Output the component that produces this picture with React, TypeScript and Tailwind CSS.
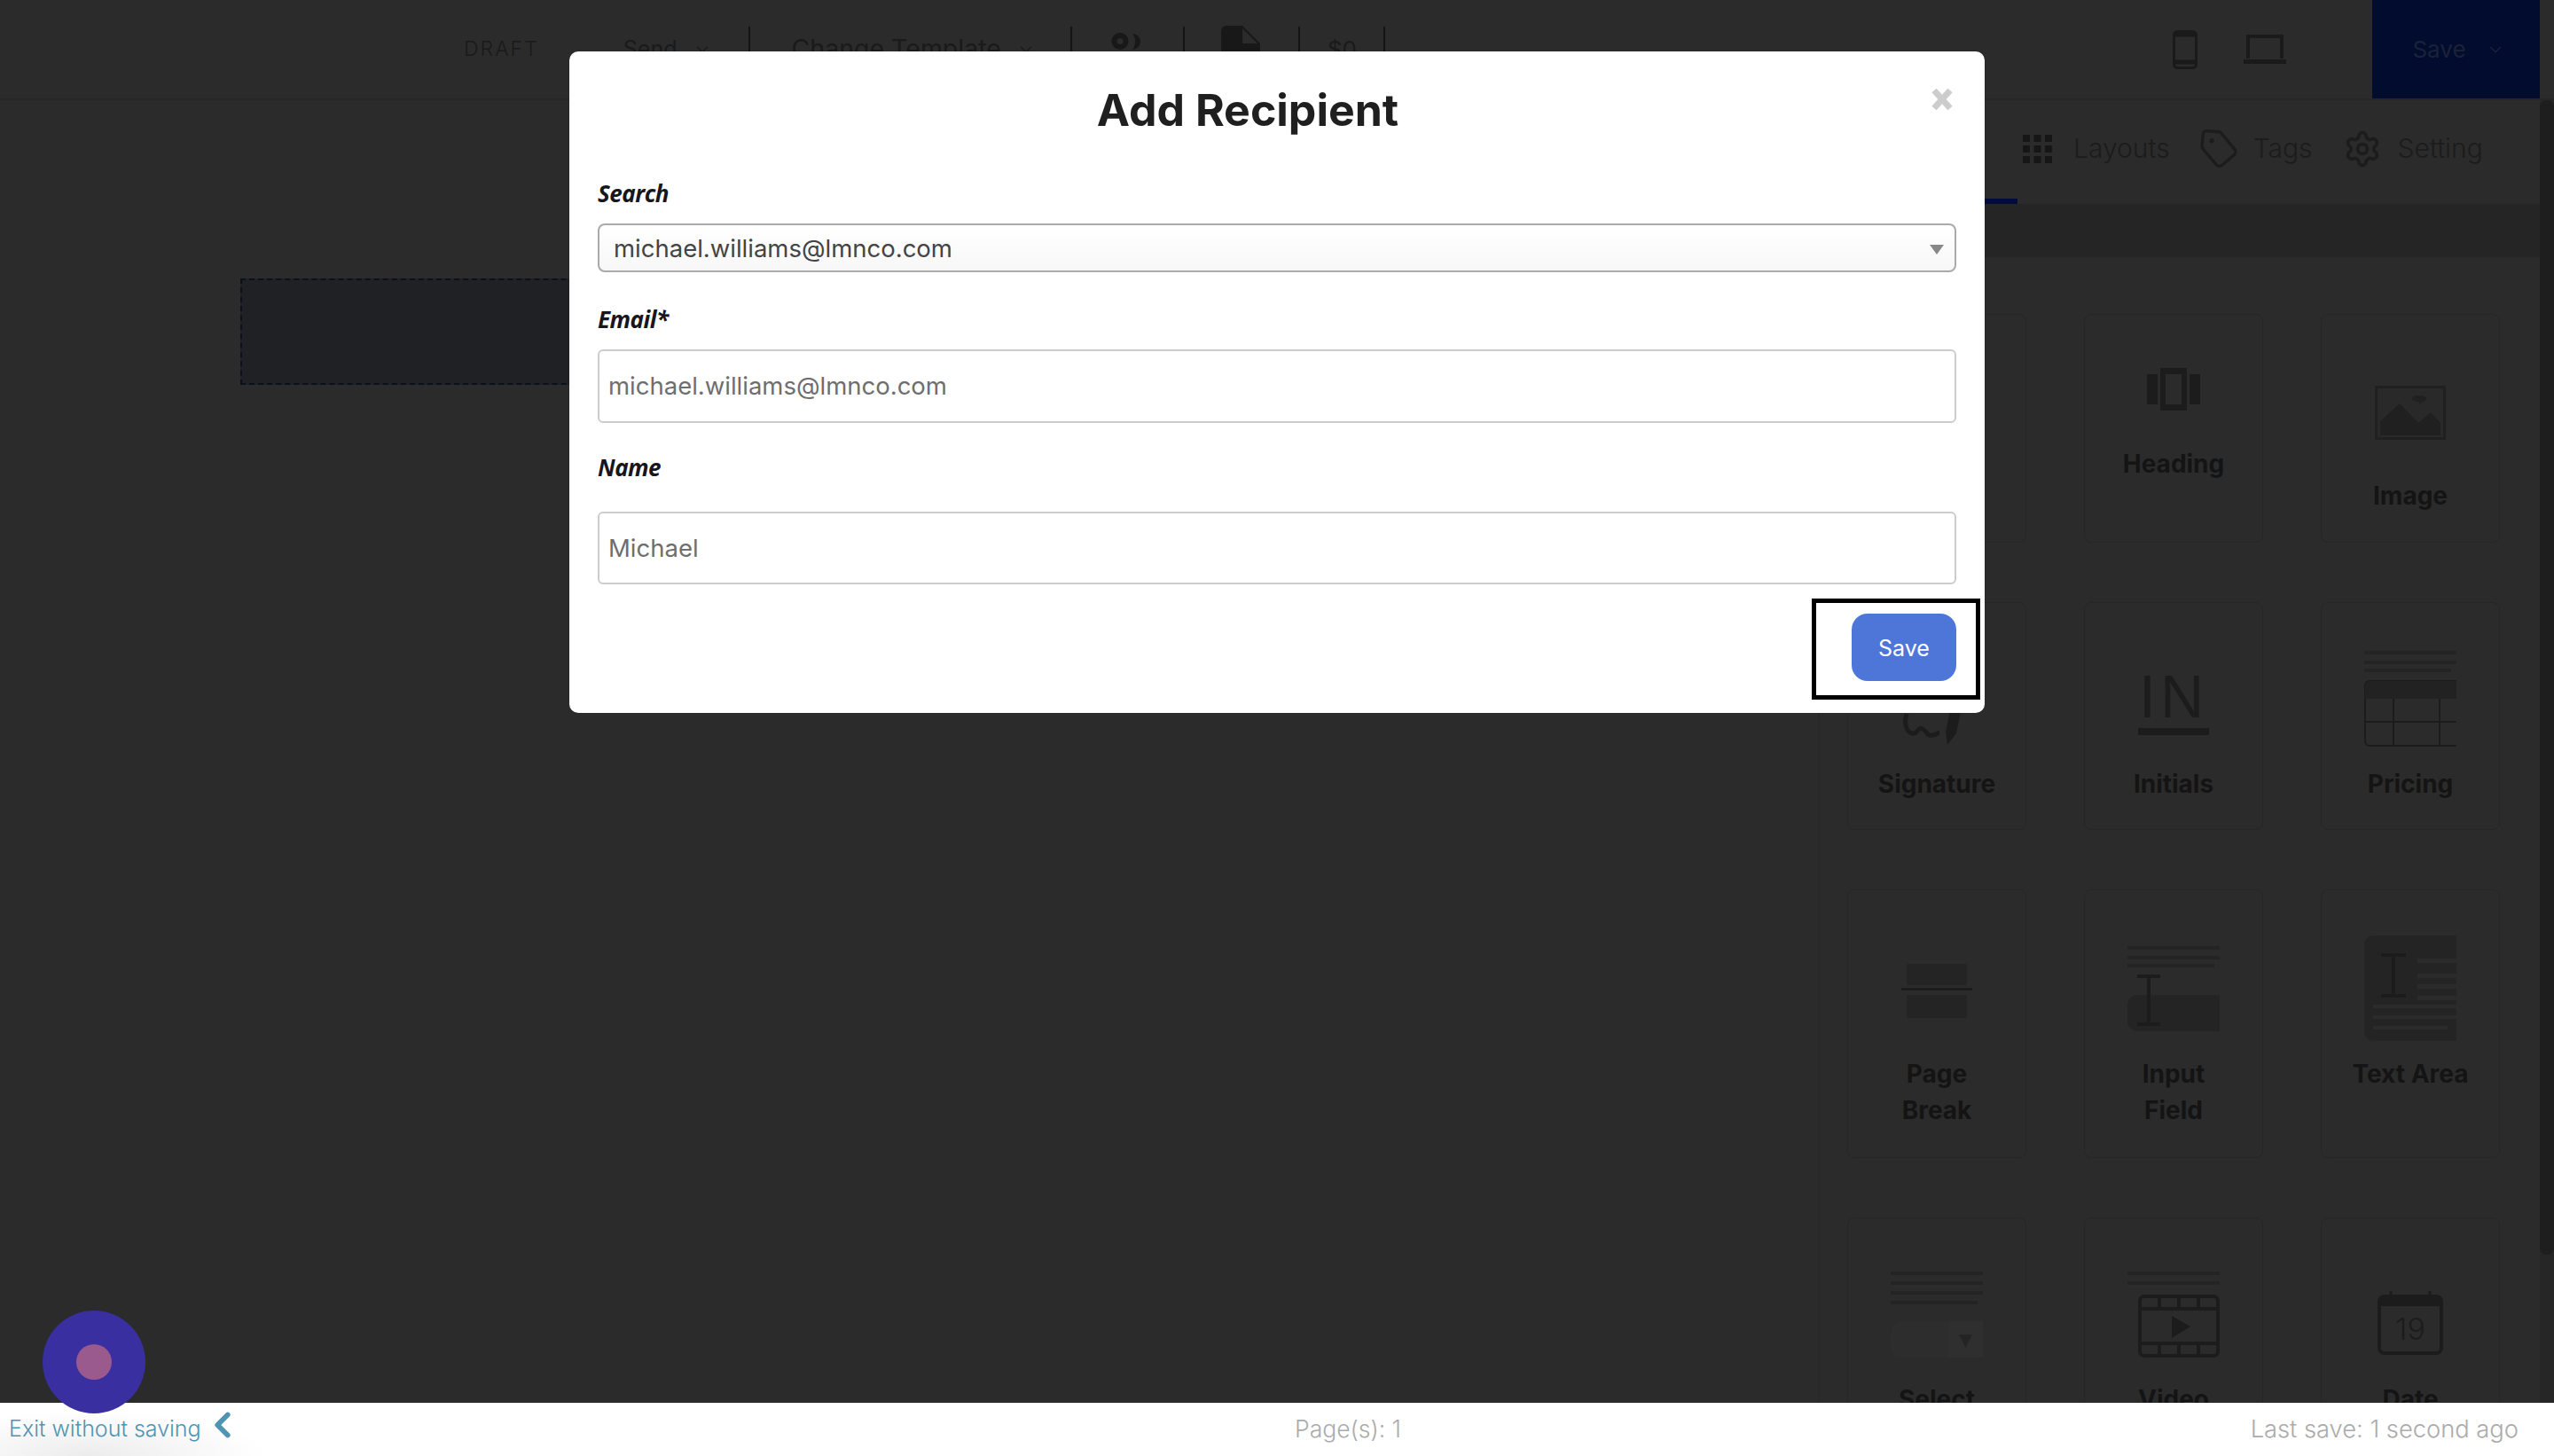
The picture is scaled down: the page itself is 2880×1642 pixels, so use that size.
import React from 'react'
import { ChevronDown, ChevronLeft, Settings, Tag } from 'lucide-react'

const ink = '#1c1c1c'
const soft = '#242424'

const GridIcon = () => (
  <svg width="33" height="32" viewBox="0 0 33 32" fill="#161616" className="ml-[229px]">
    {[0, 12.500, 25].map((x) =>
      [0, 12, 24].map((y) => <rect key={`${x}-${y}`} x={x} y={y} width="8" height="8" />)
    )}
  </svg>
)

const PeopleIcon = () => (
  <svg width="34" height="20" viewBox="0 0 34 20" fill="#181818">
    <path fillRule="evenodd" d="M10 0a9.500 9.500 0 1 1 0 19 9.500 9.500 0 0 1 0-19zm0 6a3.500 3.500 0 1 0 0 7 3.500 3.500 0 0 0 0-7z" />
    <path d="M24 1a9 9 0 0 1 0 18c2-2 3-5 3-9s-1-7-3-9z" />
  </svg>
)

const DocIcon = () => (
  <svg width="44" height="30" viewBox="0 0 44 30" fill="#181818">
    <path fillRule="evenodd" d="M6 0h18l20 20v10H0V6a6 6 0 0 1 6-6zm18 3v17h17z" />
  </svg>
)

const PhoneIcon = () => (
  <svg width="28" height="44" viewBox="0 0 28 44" fill="none" stroke="#1a1a1a" strokeWidth="3">
    <rect x="1.500" y="1.500" width="25" height="41" rx="4" />
    <path d="M2 5h24" strokeWidth="5" />
    <path d="M2 36h24" strokeWidth="5" />
  </svg>
)

const LaptopIcon = () => (
  <svg width="48" height="34" viewBox="0 0 48 34" fill="none" className="ml-[52px]">
    <path d="M5 27V2h38v25" stroke="#1a1a1a" strokeWidth="4" />
    <rect y="28" width="48" height="5" fill="#1a1a1a" />
  </svg>
)

const HeadingIcon = () => (
  <svg width="60" height="48" viewBox="0 0 60 48" fill={ink}>
    <rect x="0" y="7" width="12" height="34" />
    <rect x="48" y="7" width="12" height="34" />
    <path fillRule="evenodd" d="M15 0h30v48H15zM21 7v34h18V7z" />
  </svg>
)

const ImageIcon = () => (
  <svg width="80" height="61" viewBox="0 0 80 61" fill="#202020">
    <rect x="3" y="3" width="74" height="55" fill="#292929" />
    <path fillRule="evenodd" d="M0 0h80v61H0zM3 3v55h74V3z" />
    <path d="M6 56V40l22-20 21 22 14-12 11 12v14z" />
    <path d="M42 15c0-3 4-4 8-4s8 1 8 4c0 2-3 3-5 3l-2 3-2-3c-3 0-7-1-7-3z" />
  </svg>
)

const SignatureIcon = () => (
  <svg width="76" height="92" viewBox="0 0 76 92" fill="none" stroke={ink} strokeWidth="5">
    <path d="M4 54c-3 10-1 20 6 22 7 2 6-8 12-5 5 2 4 9 12 7 5-1 6-3 7-3" />
    <path d="M50 89l-2-14 14-70 12 3-14 68z" fill={ink} stroke="none" />
  </svg>
)

const InitialsIcon = () => (
  <div className="flex flex-col items-center h-[69px] w-[80px]">
    <span className="text-[#1c1c1c] text-[68px] leading-[50px] font-['Liberation_Sans',sans-serif] tracking-[5px]">IN</span>
    <div className="w-[80px] h-[8px] bg-[#1c1c1c] mt-[11px]" />
  </div>
)

const PricingIcon = () => (
  <svg width="104" height="109" viewBox="0 0 104 109" fill="none">
    <g fill={soft}>
      <rect width="104" height="4" />
      <rect y="11" width="104" height="4" />
      <rect y="20" width="98" height="4" />
    </g>
    <path d="M104 34H6a5 5 0 0 0-5 5v63a5 5 0 0 0 5 5h98" stroke={ink} strokeWidth="2" />
    <path d="M1 54V39a5 5 0 0 1 5-5h98v20z" fill="#222222" />
    <path d="M1 80h103M33 54v53M85 54v53" stroke={ink} strokeWidth="2" />
  </svg>
)

const PageBreakIcon = () => (
  <svg width="80" height="61" viewBox="0 0 80 61">
    <rect x="6" width="68" height="24" fill={soft} />
    <rect y="27" width="80" height="3" fill={ink} />
    <rect x="6" y="35" width="68" height="26" fill={soft} />
  </svg>
)

const InputIcon = () => (
  <svg width="104" height="96" viewBox="0 0 104 96">
    <g fill={soft}>
      <rect width="104" height="4" />
      <rect y="11" width="104" height="4" />
      <rect y="20" width="98" height="4" />
      <path d="M104 55H12a12 12 0 0 0-12 12v17a12 12 0 0 0 12 12h92z" />
    </g>
    <path d="M11 34h26M24 34v55M11 88h26" stroke={ink} strokeWidth="4" />
  </svg>
)

const TextAreaIcon = () => (
  <svg width="104" height="119" viewBox="0 0 104 119">
    <path d="M104 0H10A10 10 0 0 0 0 10v99a10 10 0 0 0 10 10h94z" fill={soft} />
    <g fill="#2b2b2b">
      <rect x="60" y="26" width="44" height="5" />
      <rect x="60" y="43" width="44" height="5" />
      <rect x="60" y="55" width="44" height="5" />
      <rect x="60" y="68" width="44" height="5" />
      <rect x="10" y="78" width="94" height="4" />
      <rect x="10" y="90" width="94" height="4" />
      <rect x="10" y="102" width="84" height="4" />
    </g>
    <path d="M19 22h28M33 22v46M19 68h28" stroke={ink} strokeWidth="4" />
  </svg>
)

const SelectIcon = () => (
  <svg width="104" height="97" viewBox="0 0 104 97">
    <g fill={soft}>
      <rect width="104" height="4" />
      <rect y="11" width="104" height="4" />
      <rect y="22" width="104" height="4" />
      <rect y="33" width="98" height="4" />
    </g>
    <path d="M66 56H12A12 12 0 0 0 0 68v17a12 12 0 0 0 12 12h54z" fill="#2d2d2d" />
    <rect x="66" y="56" width="38" height="41" fill="#2f2f2f" />
    <path d="M77 71h15l-7.500 15z" fill={soft} />
  </svg>
)

const VideoIcon = () => (
  <svg width="104" height="97" viewBox="0 0 104 97" fill="none">
    <g fill={soft}>
      <rect width="104" height="4" />
      <rect y="11" width="104" height="4" />
    </g>
    <g stroke={ink} strokeWidth="4">
      <rect x="14" y="28" width="88" height="67" rx="5" />
      <path d="M14 42h88M14 81h88M36 28v14M58 28v14M80 28v14M36 81v14M58 81v14M80 81v14" />
    </g>
    <path d="M50 50l21 12-21 13z" fill={ink} />
  </svg>
)

const DateIcon = () => (
  <div className="relative w-[74px] h-[72px]">
    <svg width="74" height="72" viewBox="0 0 74 72" fill="none" className="absolute inset-0">
      <rect x="2" y="6" width="70" height="64" rx="6" stroke={ink} strokeWidth="4" />
      <path d="M2 17V10a5 5 0 0 1 5-5h60a5 5 0 0 1 5 5v7z" fill={ink} />
      <path d="M15 0v6M59 0v6" stroke={ink} strokeWidth="3" />
    </svg>
    <span className="absolute inset-x-0 top-[23px] text-center text-[#1c1c1c] text-[34px] font-light leading-[40px]">19</span>
  </div>
)

const tiles = [
  { label: 'Text', pad: 'pt-[60px]', gap: 'mt-[40px]', icon: <HeadingIcon /> },
  { label: 'Heading', pad: 'pt-[60px]', gap: 'mt-[40px]', icon: <HeadingIcon /> },
  { label: 'Image', pad: 'pt-[80px]', gap: 'mt-[43px]', icon: <ImageIcon /> },
  { label: 'Signature', pad: 'pt-[71px]', gap: 'mt-[21px]', icon: <SignatureIcon /> },
  { label: 'Initials', pad: 'pt-[80px]', gap: 'mt-[35px]', icon: <InitialsIcon /> },
  { label: 'Pricing', pad: 'pt-[54px]', gap: 'mt-[21px]', icon: <PricingIcon /> },
  { label: 'Page\nBreak', pad: 'pt-[83px]', gap: 'mt-[43px]', icon: <PageBreakIcon /> },
  { label: 'Input\nField', pad: 'pt-[63px]', gap: 'mt-[28px]', icon: <InputIcon /> },
  { label: 'Text Area', pad: 'pt-[51px]', gap: 'mt-[17px]', icon: <TextAreaIcon /> },
  { label: 'Select', pad: 'pt-[60px]', gap: 'mt-[27px]', icon: <SelectIcon /> },
  { label: 'Video', pad: 'pt-[60px]', gap: 'mt-[27px]', icon: <VideoIcon /> },
  { label: 'Date', pad: 'pt-[82px]', gap: 'mt-[30px]', icon: <DateIcon /> },
]

const Divider = () => <div className="w-[2px] h-[48px] bg-[#141414]" />

const App = () => {
  return (
    <div className="relative w-[2880px] h-[1642px] overflow-hidden flex flex-col bg-[#2b2b2b] font-['Inter',sans-serif]">
      {/* top bar */}
      <header className="h-[113px] shrink-0 flex items-center border-b-2 border-[#262626] text-[#1a1a1a]">
        <span className="ml-[523px] tracking-[2px] font-light text-[23px]">DRAFT</span>
        <span className="ml-[95px] text-[25px]">Send</span>
        <ChevronDown size={22} strokeWidth={1.5} className="ml-[18px]" />
        <div className="ml-[41px] self-start mt-[30px]"><Divider /></div>
        <span className="ml-[46px] text-[28.500px]">Change Template</span>
        <ChevronDown size={22} strokeWidth={1.5} className="ml-[17px]" />
        <div className="ml-[39px] self-start mt-[30px]"><Divider /></div>
        <div className="ml-[44px] self-start mt-[37px]"><PeopleIcon /></div>
        <div className="ml-[47px] self-start mt-[30px]"><Divider /></div>
        <div className="ml-[41px] self-start mt-[29px]"><DocIcon /></div>
        <div className="ml-[43px] self-start mt-[30px]"><Divider /></div>
        <span className="ml-[31px] text-[26px]">$0</span>
        <div className="ml-[30px] self-start mt-[30px]"><Divider /></div>
        <div className="ml-auto flex items-center">
          <PhoneIcon />
          <LaptopIcon />
          <div className="ml-[97px] mr-[16px] w-[189px] h-[111px] bg-[#020c2e] flex items-center justify-center gap-[22px] pl-[6px] text-[#1b2238] text-[26px]">
            <span>Save</span>
            <ChevronDown size={22} strokeWidth={1.5} />
          </div>
        </div>
      </header>

      <div className="flex-1 min-h-0 flex">
        {/* canvas */}
        <main className="flex-1 pt-[201px] pl-[271px]">
          <div className="w-[900px] h-[120px] bg-[#202125] border-2 border-dashed border-[#0c0f1c]" />
        </main>

        {/* side panel */}
        <aside className="w-[830px] shrink-0 flex overflow-hidden border-l-2 border-[#282828]">
          <div className="flex-1 min-w-0 flex flex-col">
            <nav className="h-[117px] shrink-0 flex items-center pb-[8px] text-[#1c1c1c] text-[30px] font-light">
              <GridIcon />
              <span className="ml-[24px]">Layouts</span>
              <Tag size={46} strokeWidth={1.75} className="ml-[32px] rotate-[5deg]" />
              <span className="ml-[16px]">Tags</span>
              <Settings size={44} strokeWidth={2} className="ml-[34px]" />
              <span className="ml-[18px]">Setting</span>
            </nav>
            <div className="h-[60px] shrink-0 bg-[#252525] relative">
              <div className="absolute left-0 top-[-6px] w-[223px] h-[6px] bg-[#020c3c]" />
            </div>
            <div className="grid grid-cols-[202px_202px_202px] grid-rows-[258px_257px_303px_280px] gap-x-[65px] gap-y-[67px] pl-[31px] pt-[64px]">
              {tiles.map((tile) => (
                <div key={tile.label} className={`flex flex-col items-center text-center rounded-lg border border-[#262626] ${tile.pad}`}>
                  {tile.icon}
                  <span className={`${tile.gap} whitespace-pre-line text-[28px] leading-[41px] font-bold text-[#141414]`}>{tile.label}</span>
                </div>
              ))}
            </div>
          </div>
          {/* scrollbar */}
          <div className="w-[16px] shrink-0 bg-[#262626]">
            <div className="h-[1302px] rounded-full bg-[#1e1e1e]" />
          </div>
        </aside>
      </div>

      {/* bottom bar */}
      <footer className="relative h-[60px] shrink-0 flex items-center justify-between pl-[10px] pr-[40px] bg-[radial-gradient(ellipse_200px_50px_at_100px_100%,#ececec,#ffffff)] text-[#ababab] font-light">
        <div className="w-[400px] flex items-center text-[#4f94b3] text-[25px]">
          <span>Exit without saving</span>
          <ChevronLeft size={46} strokeWidth={3} className="ml-[1px] -mt-[10px]" />
        </div>
        <span className="ml-[1050px] text-[26.500px]">Page(s): 1</span>
        <span className="ml-auto text-[27.300px]">Last save: 1 second ago</span>
      </footer>

      {/* help bubble */}
      <div className="absolute left-[48px] top-[1478px] w-[116px] h-[116px] rounded-full bg-[#3a2fa0] flex items-center justify-center">
        <div className="w-[40px] h-[40px] rounded-full bg-[#9a5a8e]" />
      </div>

      {/* modal */}
      <div className="absolute left-[642px] top-[58px] w-[1596px] h-[746px] rounded-[10px] bg-white px-[32px]">
        <svg width="24" height="24" viewBox="0 0 24 24" className="absolute right-[36px] top-[42px]" stroke="#cccccc" strokeWidth="7">
          <path d="M3 2l18 20M21 2L3 22" />
        </svg>
        <h2 className="pt-[34px] pr-[66px] text-center text-[#1f1f1f] text-[50px] leading-[64px] font-bold">Add Recipient</h2>

        <label className="block mt-[44px] font-['Open_Sans',sans-serif] font-bold italic text-[26px] tracking-[-0.5px] leading-[36px] text-[#16161c]">Search</label>
        <div className="mt-[16px] h-[55px] flex items-center justify-between pl-[16px] pr-[12px] pt-[3px] rounded-lg border-2 border-[#aaaaaa] bg-gradient-to-b from-white to-[#f7f7f7] text-[#444444] text-[27.500px]">
          <span>michael.williams@lmnco.com</span>
          <div className="w-0 h-0 border-x-[8px] border-x-transparent border-t-[11px] border-t-[#888888]" />
        </div>

        <label className="block mt-[35px] font-['Open_Sans',sans-serif] font-bold italic text-[26px] tracking-[-0.5px] leading-[36px] text-[#16161c]">Email*</label>
        <input readOnly defaultValue="michael.williams@lmnco.com" className="block w-full mt-[16px] h-[83px] px-[10px] pb-[2px] rounded-md border-2 border-[#cccccc] text-[#6e6e6e] text-[27.500px] outline-none" />

        <label className="block mt-[32px] font-['Open_Sans',sans-serif] font-bold italic text-[26px] tracking-[-0.5px] leading-[36px] text-[#16161c]">Name</label>
        <input readOnly defaultValue="Michael" className="block w-full mt-[32px] h-[82px] px-[10px] rounded-md border-2 border-[#cccccc] text-[#6e6e6e] text-[27.500px] outline-none" />

        <div className="mt-[33px] flex justify-end">
          <button className="w-[118px] h-[76px] pt-[3px] rounded-[18px] bg-[#4e76d9] text-white text-[25px]">Save</button>
        </div>

        {/* highlight round the save button */}
        <div className="absolute left-[1401px] top-[617px] w-[190px] h-[114px] border-[5px] border-black" />
      </div>
    </div>
  )
}

export default App
